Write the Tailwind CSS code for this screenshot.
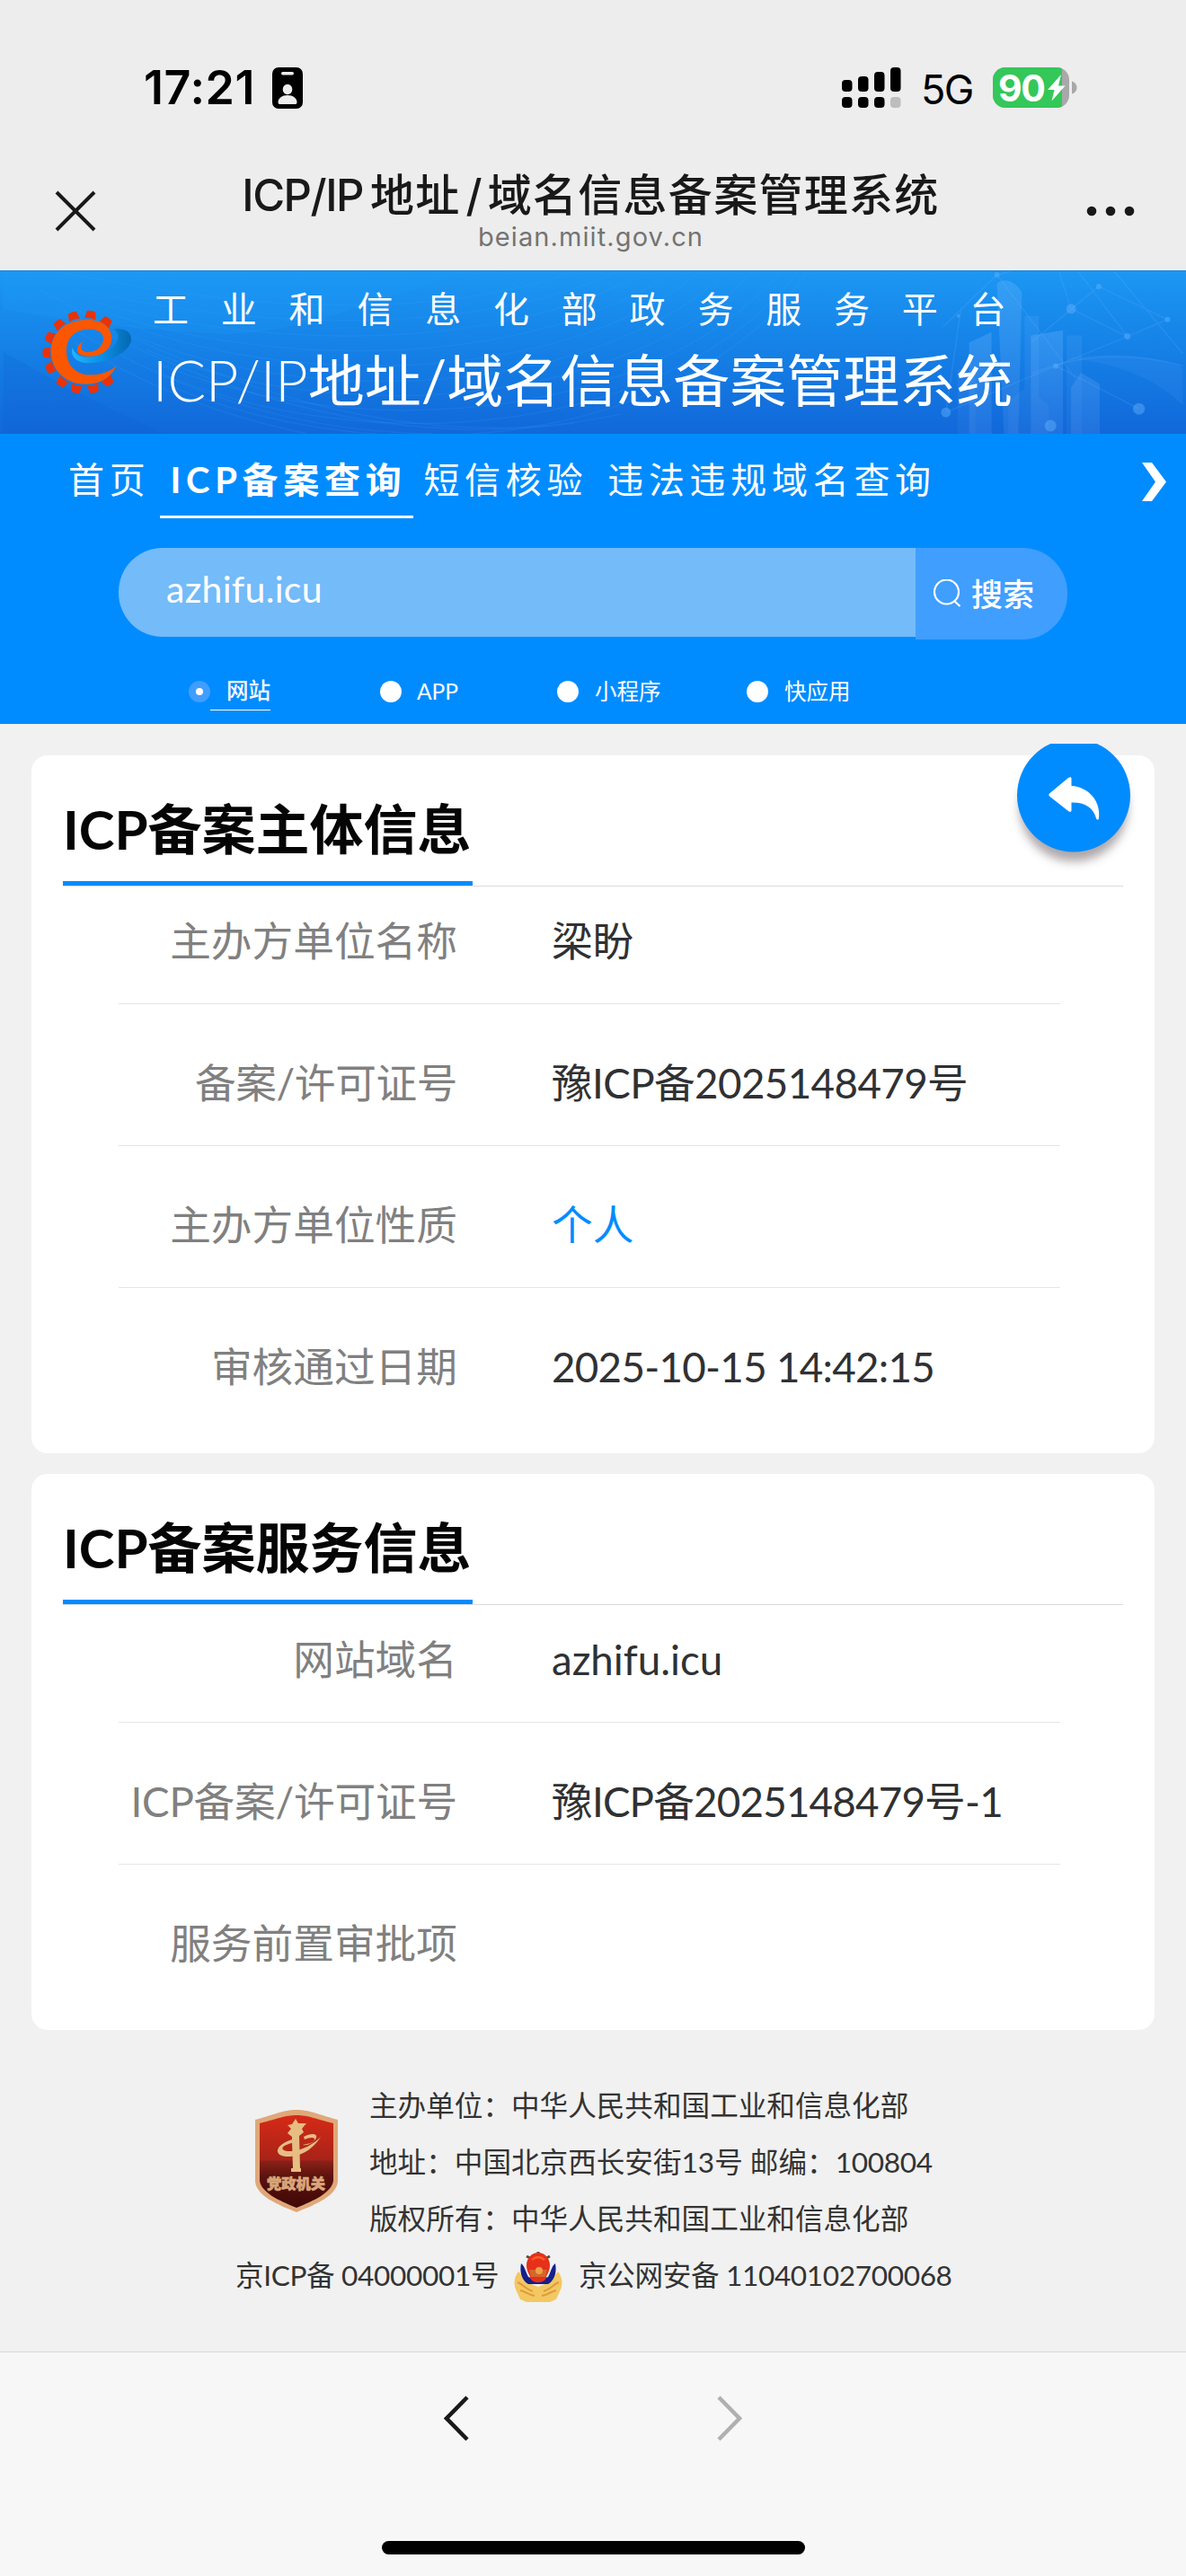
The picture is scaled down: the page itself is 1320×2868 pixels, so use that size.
<!DOCTYPE html>
<html lang="zh-CN">
<head>
  <meta charset="UTF-8" />
  <title>ICP/IP地址/域名信息备案管理系统</title>
  <script src="https://cdn.jsdelivr.net/npm/@tailwindcss/browser@4"></script>
</head>
<body class="w-[1320px] h-[2868px] bg-[#f1f1f1] font-[Lato,'Noto_Sans_CJK_SC',sans-serif] overflow-hidden flex flex-col">

  <!-- Status bar + title -->
  <header class="h-[301px] shrink-0 bg-[#ededed] font-[Inter,'Noto_Sans_CJK_SC',sans-serif]">
    <div class="h-[172px] pt-[64px] pl-[160px] pr-[120px] flex items-start justify-between">
      <div class="flex items-center h-[68px]">
        <span class="text-[52px] leading-[68px] font-semibold tracking-[0.600px] w-[142px] whitespace-nowrap">17:21</span>
        <svg class="w-[36px] h-[46px]" viewBox="0 0 36 46">
          <rect x="1" y="0" width="34" height="46" rx="7" fill="#000" />
          <rect x="11" y="5" width="14" height="3.4" rx="1.7" fill="#ededed" />
          <ellipse cx="18" cy="24.5" rx="5.3" ry="5.8" fill="#ededed" />
          <path d="M7.5 39c0-4.500 4.500-8 10.500-8s10.500 3.500 10.500 8c0 1.300-.6 2-1.800 2H9.300c-1.200 0-1.800-.7-1.800-2z" fill="#ededed" />
        </svg>
      </div>
      <div class="flex items-center h-[68px]">
        <svg class="w-[67px] h-[46px]" viewBox="0 0 67 46">
          <g fill="#000">
            <rect x="0" y="14" width="11.500" height="13" rx="4" />
            <rect x="18" y="10" width="11.500" height="17" rx="4" />
            <rect x="36" y="5" width="11.500" height="22" rx="4" />
            <rect x="54" y="0" width="11.500" height="27" rx="4" />
            <rect x="0" y="33" width="11.500" height="12" rx="4" />
            <rect x="18" y="33" width="11.500" height="12" rx="4" />
            <rect x="36" y="33" width="11.500" height="12" rx="4" />
          </g>
          <rect x="54" y="33" width="11.500" height="12" rx="4" fill="#bdbdbd" />
        </svg>
        <span class="text-[45px] leading-[68px] ml-[21px] mt-[3px] w-[80px] tracking-[-1.500px]">5G</span>
        <svg class="w-[95px] h-[46px]" viewBox="0 0 95 46">
          <defs><clipPath id="bat"><rect x="0" y="0" width="85" height="45" rx="14" /></clipPath></defs>
          <g clip-path="url(#bat)">
            <rect width="85" height="45" fill="#a8a8a8" />
            <rect width="77" height="45" fill="#34c759" />
          </g>
          <path d="M88 15.500c3.500 1 5.500 4 5.500 7s-2 6-5.500 7z" fill="#a8a8a8" />
          <text x="6" y="37.500" textLength="53" font-family="Inter" font-weight="700" font-size="41" fill="#fff">90</text>
          <path d="M76 8 61 25h7.500l-3 12.500L80.500 20.500h-7.500z" fill="#fff" />
        </svg>
      </div>
    </div>
    <div class="h-[129px] pl-[60px] pr-[55px] flex justify-between">
      <svg class="w-[48px] h-[48px] mt-[39px]" viewBox="0 0 48 48" fill="none" stroke="#191919" stroke-width="4">
        <path d="M3 3 45 45M45 3 3 45" />
      </svg>
      <div class="text-center -ml-[2px] pt-[14px]">
        <div class="text-[49px] leading-[64px] font-medium text-[#191919] whitespace-nowrap"><span class="tracking-[-1.500px]">ICP/IP</span><span class="ml-[8px] tracking-[1.300px]">地址</span><span class="mx-[6px]">/</span><span class="tracking-[1.300px]">域名信息备案管理系统</span></div>
        <div class="text-[29px] leading-[36px] -mt-[4px] text-[#737373] tracking-[1.100px]">beian.miit.gov.cn</div>
      </div>
      <svg class="w-[56px] h-[14px] mt-[56px]" viewBox="0 0 56 14" fill="#191919">
        <circle cx="6" cy="7" r="5.300" /><circle cx="27" cy="7" r="5.300" /><circle cx="48" cy="7" r="5.300" />
      </svg>
    </div>
  </header>

  <!-- Banner -->
  <div class="relative h-[182px] shrink-0 bg-linear-to-b from-[#1c97f3] to-[#1268d9] border-t border-[#1683dc] text-white">
    <svg class="absolute inset-0 w-full h-full" viewBox="0 0 1320 182" fill="none">
      <defs>
        <linearGradient id="tower" x1="0" y1="0" x2="0" y2="1">
          <stop offset="0" stop-color="#7cc0ff" stop-opacity=".26" />
          <stop offset="1" stop-color="#7cb0ff" stop-opacity=".14" />
        </linearGradient>
      </defs>
      <path d="M0 42C90 60 170 66 240 70S400 40 520 0H0z" fill="#1fa0f8" opacity=".2" />
      <path d="M0 90C60 125 110 150 180 182H0z" fill="#0d5fd0" opacity=".2" />
      <g stroke="#35a8ff" stroke-opacity=".15" stroke-width="1.500">
        <path d="M60 0C250 40 470 60 640 0M80 20C280 65 520 75 690 0M100 34C300 90 560 90 720 0M120 48C320 112 600 105 750 0M140 60C340 135 640 120 780 0M150 74C360 158 670 135 810 0M160 88C380 178 700 150 840 0M170 102C400 198 730 165 870 0M180 116C420 215 750 180 890 0M190 130C440 232 770 190 900 0" />
        <path d="M60 40C220 130 420 200 640 170M40 20C200 110 440 215 690 160M70 60C220 150 350 180 480 182M80 80C180 140 260 165 340 182" />
      </g>
      <g stroke="#6fb9ff" stroke-opacity=".17" stroke-width="1.500">
        <path d="M1052 62 1112 4 1160-8M1112 4 1200 120M1195 42 1226 17 1303 54 1258 73 1195 42 1180-4M1200-4 1258 73 1178 106 1055 158M1178 106 1271 154M1240-4 1320 92M1226 17 1150 80M1055 158 1072 40" />
        <path d="M1150 115C1210 90 1270 92 1320 106" />
      </g>
      <path d="M1190 98C1250 88 1300 98 1320 108V150C1290 120 1240 100 1190 98z" fill="#5aa5ff" opacity=".13" />
      <g fill="url(#tower)">
        <path d="M1112 14c8-8 22-2 28 10l-4 158h-16z" />
        <path d="M1081 80 1106 68V182H1081zM1150 72 1186 66V182H1150zM1195 130 1206 114 1227 126V182H1195z" />
        <path d="M1143 50h16V182H1143zM1190 72h17v110h-17zM1068 110h20v72h-20zM1125 145 1145 130 1170 150V182H1125z" opacity=".5" />
      </g>
      <g fill="#64b1ff" opacity=".45">
        <circle cx="1112" cy="4" r="3" /><circle cx="1226" cy="17" r="3" /><circle cx="1195" cy="42" r="5.500" />
        <circle cx="1303" cy="54" r="3" /><circle cx="1258" cy="73" r="3.500" /><circle cx="1178" cy="106" r="3" />
        <circle cx="1055" cy="158" r="5.500" /><circle cx="1271" cy="154" r="6.500" /><circle cx="1172" cy="173" r="6.500" /><circle cx="1069" cy="50" r="2" />
      </g>
    </svg>
    <div class="relative flex pl-[44px]">
      <svg class="w-[104px] h-[96px] mt-[42px] shrink-0" viewBox="42 42 312 288">
        <defs>
          <linearGradient id="ring" x1="0" y1="0" x2="1" y2="0"><stop offset="0" stop-color="#22b4ff" /><stop offset=".5" stop-color="#0a8fe6" /><stop offset="1" stop-color="#0568b0" /></linearGradient>
          <path id="tooth" d="M178 48Q192 44 206 48L211 74Q192 69 173 74z" />
        </defs>
        <!-- gear teeth -->
        <g fill="#e93208">
          <use href="#tooth" transform="rotate(9.600 192 186)" />
          <use href="#tooth" transform="rotate(35.800 192 186)" />
          <use href="#tooth" transform="rotate(-17.300 192 186)" />
          <use href="#tooth" transform="rotate(-42.400 192 186)" />
          <use href="#tooth" transform="rotate(-67 192 186)" />
          <use href="#tooth" transform="rotate(-91 192 186)" />
          <use href="#tooth" transform="rotate(-115 192 186)" />
          <use href="#tooth" transform="rotate(-143 192 186)" />
          <use href="#tooth" transform="rotate(-167 192 186)" />
          <use href="#tooth" transform="rotate(166 192 186)" />
          <use href="#tooth" transform="rotate(141 192 186)" />
        </g>
        <path d="M285 108C330 106 348 118 348 145 345 185 270 225 200 223 155 220 145 190 152 172 165 205 200 210 245 193 300 175 325 125 285 108z" fill="url(#ring)" />
        <path d="M300 230C275 280 235 293 195 293 130 293 80 245 80 185 80 120 130 78 200 78 255 78 283 105 283 140 283 185 235 203 200 200 165 198 155 175 187 148 174 175 185 187 205 186 235 184 255 165 255 140 255 115 225 108 200 110 160 112 130 140 132 185 134 235 170 262 210 262 250 262 280 250 300 230z" fill="#fa5700" />
      </svg>
      <div class="ml-[22px] pt-[13px] whitespace-nowrap">
        <div class="text-[40px] leading-[58px] tracking-[35.800px]">工业和信息化部政务服务平台</div>
        <div class="text-[63px] leading-[94px] mt-[3px]"><span class="font-light">ICP/IP</span>地址/域名信息备案管理系统</div>
      </div>
    </div>
  </div>

  <!-- Nav + search -->
  <section class="h-[323px] shrink-0 bg-[#008cff] text-white">
    <nav class="h-[95px] pl-[65px] pr-[22px] flex items-start text-[40px] leading-[58px] tracking-[5.700px] whitespace-nowrap pt-[22px]">
      <a class="px-[11px]">首页</a>
      <a class="px-[11px] h-[72px] w-[282px] font-bold border-b-3 border-white">ICP备案查询</a>
      <a class="px-[11px]">短信核验</a>
      <a class="px-[11px]">违法违规域名查询</a>
      <svg class="ml-auto w-[27px] h-[43px] mt-[10px]" viewBox="0 0 27 43"><path d="M0 0H11L27 21.500 11 43H0L15 21.500z" fill="#fff" /></svg>
    </nav>
    <div class="pl-[132px] mt-[32px] flex items-start">
      <div class="w-[887px] h-[99px] rounded-l-[49px] bg-[#73bbf9] pl-[53px] text-[41px] leading-[92px] tracking-[0.300px]">azhifu.icu</div>
      <button class="w-[169px] h-[102px] rounded-r-[50px] bg-[#409eff] flex items-center pl-[19px] text-[35px] font-medium">
        <svg class="w-[32px] h-[32px]" viewBox="0 0 32 32" fill="none" stroke="#fff" stroke-width="2.200"><circle cx="15.500" cy="14" r="13.500" /><path d="m24 24 6.500 6" /></svg>
        <span class="ml-[11px]">搜索</span>
      </button>
    </div>
    <div class="pl-[210px] mt-[36px] flex text-[24.500px] leading-[42px]">
      <label class="flex items-center w-[213px]"><i class="size-[24px] rounded-full bg-[#409eff] flex items-center justify-center"><i class="size-[8px] rounded-full bg-white"></i></i><span class="pl-[18px] border-b border-white w-[67px] font-medium whitespace-nowrap">网站</span></label>
      <label class="flex items-center w-[197px]"><i class="size-[24px] rounded-full bg-white"></i><span class="pl-[17px]">APP</span></label>
      <label class="flex items-center w-[211px]"><i class="size-[24px] rounded-full bg-white"></i><span class="pl-[18px]">小程序</span></label>
      <label class="flex items-center"><i class="size-[24px] rounded-full bg-white"></i><span class="pl-[18px]">快应用</span></label>
    </div>
  </section>

  <main class="relative px-[35px] pt-[35px] flex flex-col gap-[23px]">
    <section class="h-[777px] bg-white rounded-[18px] px-[35px]">
      <h2 class="h-[146px] flex border-b border-[#dcdcdc] text-[60px] leading-[90px] font-bold text-[#050505]">
        <span class="h-[145px] pt-[37px] w-[456px] border-b-5 border-[#008cff] whitespace-nowrap">ICP备案主体信息</span>
      </h2>
      <dl class="ml-[62px] w-[1048px] text-[45.700px] leading-[68px] text-[#303133] whitespace-nowrap">
        <div class="flex h-[131px] pt-[27px] border-b border-[#e5e5e5]"><dt class="w-[377px] text-right text-[#808080]">主办方单位名称</dt><dd class="ml-[105px]">梁盼</dd></div>
        <div class="flex h-[158px] pt-[54px] border-b border-[#e5e5e5]"><dt class="w-[377px] text-right text-[#808080] tracking-[-0.400px]">备案/许可证号</dt><dd class="ml-[105px] tracking-[-0.600px]">豫ICP备2025148479号</dd></div>
        <div class="flex h-[158px] pt-[54px] border-b border-[#e5e5e5]"><dt class="w-[377px] text-right text-[#808080]">主办方单位性质</dt><dd class="ml-[105px] text-[#008cff]">个人</dd></div>
        <div class="flex h-[158px] pt-[54px]"><dt class="w-[377px] text-right text-[#808080]">审核通过日期</dt><dd class="ml-[105px] tracking-[-0.700px]">2025-10-15 14:42:15</dd></div>
      </dl>
    </section>

    <section class="h-[619px] bg-white rounded-[18px] px-[35px]">
      <h2 class="h-[146px] flex border-b border-[#dcdcdc] text-[60px] leading-[90px] font-bold text-[#050505]">
        <span class="h-[145px] pt-[37px] w-[456px] border-b-5 border-[#008cff] whitespace-nowrap">ICP备案服务信息</span>
      </h2>
      <dl class="ml-[62px] w-[1048px] text-[45.700px] leading-[68px] text-[#303133] whitespace-nowrap">
        <div class="flex h-[131px] pt-[27px] border-b border-[#e5e5e5]"><dt class="w-[377px] text-right text-[#808080]">网站域名</dt><dd class="ml-[105px]">azhifu.icu</dd></div>
        <div class="flex h-[158px] pt-[54px] border-b border-[#e5e5e5]"><dt class="w-[377px] text-right text-[#808080] tracking-[-0.200px]">ICP备案/许可证号</dt><dd class="ml-[105px] tracking-[-0.800px]">豫ICP备2025148479号-1</dd></div>
        <div class="flex h-[158px] pt-[54px]"><dt class="w-[377px] text-right text-[#808080]">服务前置审批项</dt><dd class="ml-[105px]"></dd></div>
      </dl>
    </section>

    <!-- Floating back button -->
    <svg class="absolute left-[1120px] top-[22px] w-[150px] h-[150px]" viewBox="0 0 150 150">
      <defs><filter id="blur" x="-30%" y="-30%" width="160%" height="160%"><feGaussianBlur stdDeviation="5.500" /></filter></defs>
      <circle cx="75" cy="71" r="60" fill="#5c5054" opacity=".5" filter="url(#blur)" />
      <circle cx="75" cy="57.500" r="63" fill="#008cff" />
      <path d="M48 55.500 69 38c2-1.500 3.500-1 3.500 1v8c19 1 33 17 30.500 36-.3 2-2.500 2-3 0-3-12-13-18-27.500-17.500v8.500c0 2-1.500 2.500-3.500 1L48 58.500Q46.500 57 48 55.500z" fill="#fff" />
    </svg>
  </main>

  <footer class="flex-1 pt-[53px] text-[31.600px] leading-[63px] text-[#333] whitespace-nowrap">
    <div class="flex pl-[283px]">
      <svg class="w-[94px] h-[116px] mt-[35px]" viewBox="0 0 94 116">
        <defs><linearGradient id="shield" x1="0" y1="0" x2="0" y2="1"><stop offset="0" stop-color="#d62a17" /><stop offset=".48" stop-color="#a82318" /><stop offset=".5" stop-color="#8a2018" /><stop offset=".66" stop-color="#5c130e" /><stop offset="1" stop-color="#3f0806" /></linearGradient></defs>
        <path d="M1 12C24 6 32 1 47 1s23 5 46 11v69c-2 16-24 25-46 34C25 106 3 97 1 81z" fill="#e0a878" />
        <path d="M6 16C26 11 34 7 47 7s21 4 41 9v64c-2 13-21 22-41 30C27 102 8 93 6 80z" fill="url(#shield)" />
        <g fill="#e6bd83">
          <path d="M42 36 42 31 37 27 41 22 37 18 42 17 46 11 49 16 58 16 53 22 55 26 50 30 51 66H52V70H41V66H43z" />
          <path d="M66 36C70 31 62 31 56 34L55 31C63 26 74 27 67 35 64 39 58 41 54 40 59 39 64 38 66 36z" />
          <path d="M42 34C22 40 20 54 40 53 56 52 68 41 74 31 66 39 54 46 42 47 28 48 28 41 42 38z" />
        </g>
        <text x="46.500" y="89" text-anchor="middle" font-family="Noto Sans CJK SC" font-weight="900" font-size="16.300" stroke="#d9a67a" stroke-width=".6" fill="#d9a67a">党政机关</text>
      </svg>
      <div class="ml-[34px]">
        <p>主办单位：中华人民共和国工业和信息化部</p>
        <p>地址：中国北京西长安街13号 邮编：<span class="tracking-[-0.300px]">100804</span></p>
        <p>版权所有：中华人民共和国工业和信息化部</p>
      </div>
    </div>
    <div class="flex pl-[262px] tracking-[-0.350px]">
      <span class="w-[310px]">京ICP备 04000001号</span>
      <svg class="w-[54px] h-[58px] mt-[3px]" viewBox="0 0 54 58">
        <path d="M5 24c4 4 6 9 12 13l10 4 10-4c6-4 8-9 12-13 5 6 6 15 2 22l-4 9-7 3H14l-7-3-4-9C-1 39 0 30 5 24z" fill="#f3c862" />
        <path d="M4 36c6 2 9 8 17 10M50 36c-6 2-9 8-17 10M7 45c6 1 9 5 16 6M47 45c-6 1-9 5-16 6" stroke="#e09a3a" stroke-width="2" fill="none" />
        <path d="M8 15c4 3 4 7 8 15l11 4 11-4c4-8 4-12 8-15 2 10-1 19-8 23H16C9 34 6 25 8 15z" fill="#14208c" />
        <path d="M14 7l4 2M40 7l-4 2M27 2v4" stroke="#5b4a3a" stroke-width="3" />
        <path d="M27 3c7 0 13 6 13 14 0 6-3 10-4 13 0 4-5 6-9 6s-9-2-9-6c-1-3-4-7-4-13C14 9 20 3 27 3z" fill="#e6301a" />
        <path d="M17 22h20l-2 8H19z" fill="#d4662c" /><circle cx="28" cy="23" r="4" fill="#eda046" />
        <path d="M20 11q7-6 14 0" stroke="#ff5a26" stroke-width="2.500" fill="none" />
      </svg>
      <span class="ml-[18px]">京公网安备 11040102700068</span>
    </div>
  </footer>

  <!-- Browser toolbar -->
  <div class="h-[250px] shrink-0 bg-[#f7f7f7] border-t border-[#d8d8d8] flex flex-col items-center">
    <div class="flex justify-between w-[332px] mt-[47px]">
      <svg class="w-[28px] h-[53px]" viewBox="0 0 28 53" fill="none" stroke="#191919" stroke-width="4.500"><path d="M26 3 3 26.500 26 50" /></svg>
      <svg class="w-[28px] h-[53px]" viewBox="0 0 28 53" fill="none" stroke="#b0b0b0" stroke-width="4.500"><path d="m2 3 23 23.500L2 50" /></svg>
    </div>
    <div class="w-[471px] h-[15px] rounded-full bg-black mt-[110px]"></div>
  </div>
</body>
</html>
